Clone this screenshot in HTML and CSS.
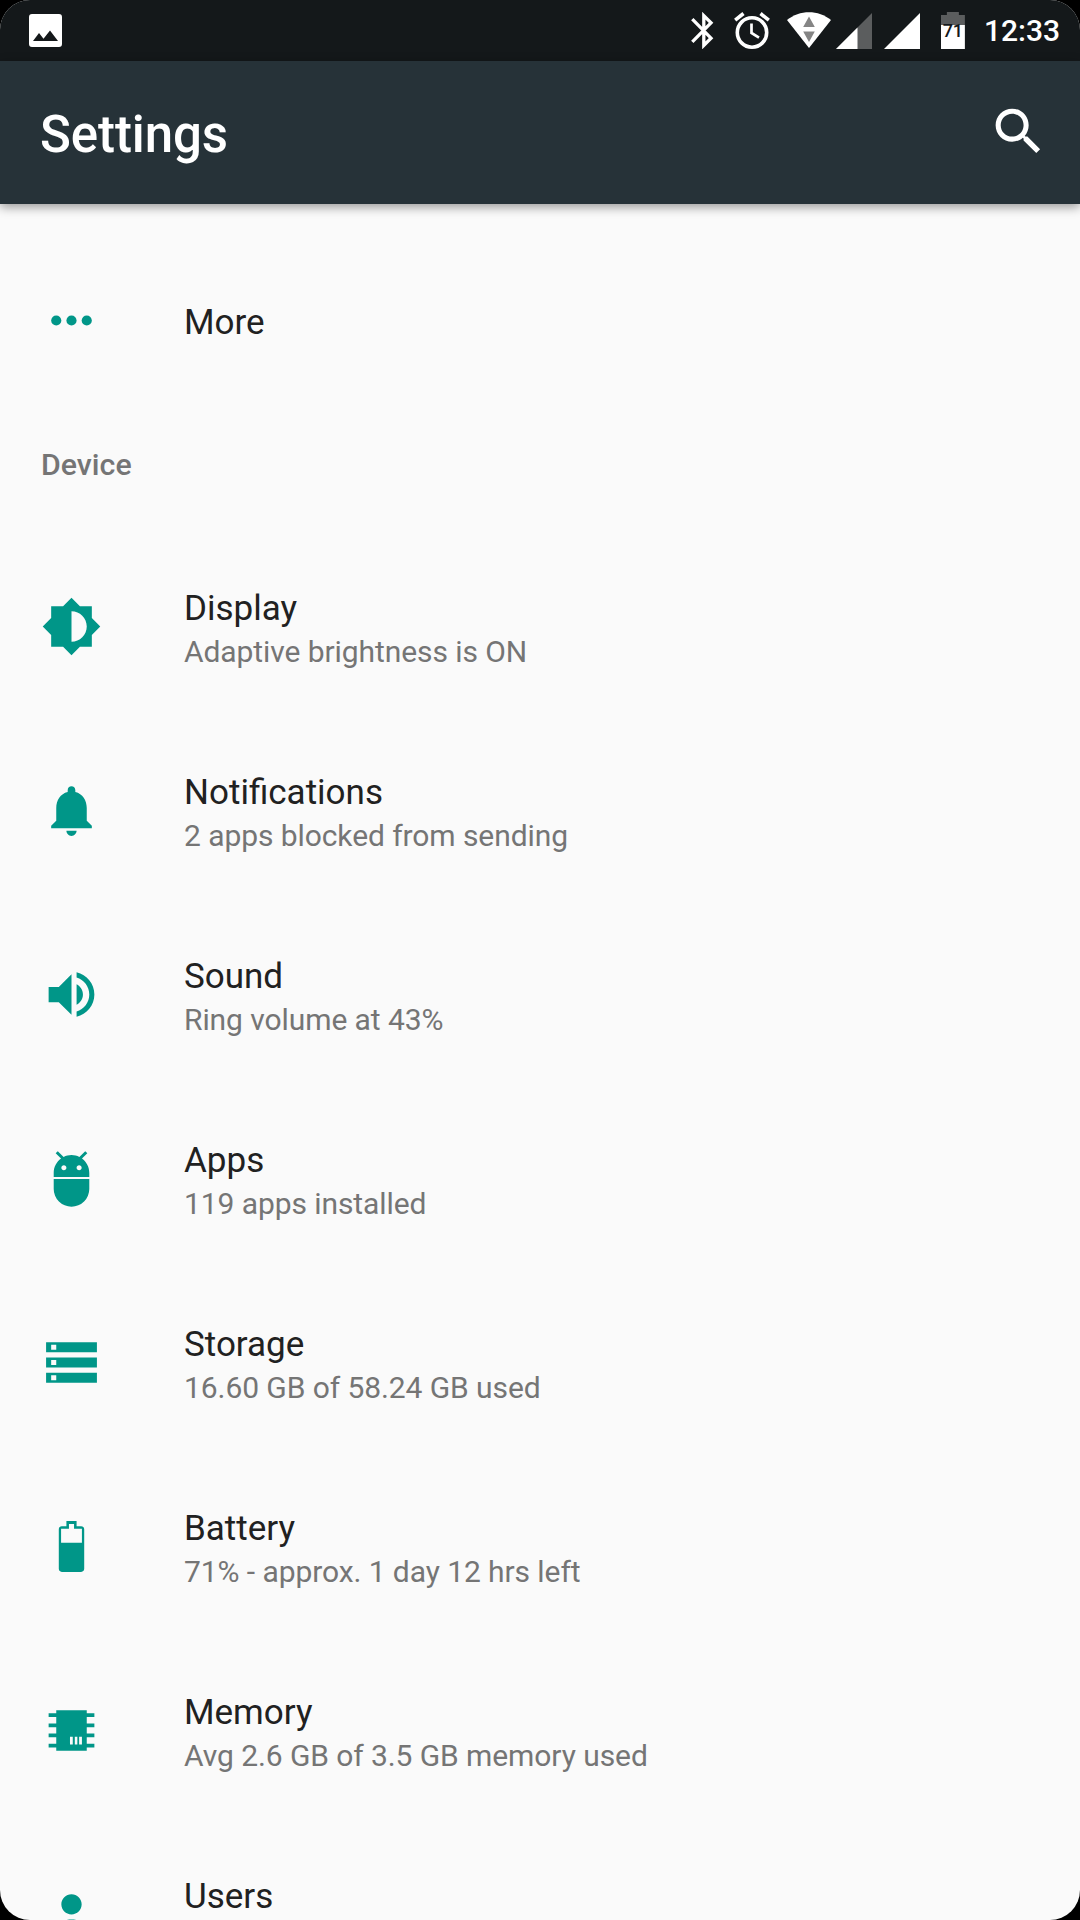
FILE: index.html
```html
<!DOCTYPE html>
<html lang="en">
<head>
  <meta charset="UTF-8" />
  <meta name="viewport" content="width=device-width, initial-scale=1.0" />
  <title>Settings</title>
  <link rel="stylesheet" href="styles.css">
</head>
<body>
  <div class="screen">
    <div class="status-bar">
      <svg class="st-picture" width="33" height="33" viewBox="0 0 33 33"><path fill="#fff" fill-rule="evenodd" d="M3 0h27a3 3 0 0 1 3 3v27a3 3 0 0 1-3 3H3a3 3 0 0 1-3-3V3a3 3 0 0 1 3-3zM4 27h25L21 16.500l-6.500 8.300L10 19z"/></svg>
      <div class="status-icons">
        <!-- bluetooth -->
        <svg class="st-bluetooth" width="23" height="37" viewBox="0 0 23 37"><path fill="none" stroke="#fff" stroke-width="3.300" d="M1.300 7.200L20 26.200l-7.200 7.200V3.700L20 10.800 1.300 29.800"/></svg>
        <!-- alarm -->
        <svg class="st-alarm" width="36" height="37" viewBox="0 0 36 37"><g fill="none" stroke="#fff" stroke-width="3.600"><circle cx="18" cy="20.500" r="14.700"/><path d="M1.200 8.200l8.300-6.700M34.800 8.200l-8.300-6.700"/><path stroke-width="2.700" d="M17.500 11.500V21l7.500 4.700"/></g></svg>
        <!-- wifi -->
        <svg class="st-wifi" width="44" height="36" viewBox="0 0 44 36"><path fill="#fff" d="M0 8C12.500-2.500 31.500-2.500 44 8L22 36z"/><path fill="#858585" d="M22 4.500L27.800 15H16.200zM22 30L27.800 19.500H16.200z"/></svg>
        <!-- mobile signal -->
        <svg class="st-signal" width="36" height="36" viewBox="0 0 36 36"><path fill="#5b5d5e" d="M36 0v36H0z"/><path fill="#fff" d="M21.500 14.500V36H0z"/></svg>
        <svg class="st-signal-full" width="36" height="36" viewBox="0 0 36 36"><path fill="#fff" d="M36 0v36H0z"/></svg>
        <div class="st-battery">71</div>
        <span class="clock">12:33</span>
      </div>
    </div>

    <header class="toolbar">
      <h1>Settings</h1>
      <svg class="icon search" viewBox="0 0 24 24"><path d="M15.500 14h-.79l-.28-.27C15.410 12.590 16 11.110 16 9.500 16 5.910 13.090 3 9.500 3S3 5.910 3 9.500 5.910 16 9.500 16c1.610 0 3.090-.59 4.230-1.570l.27.28v.79l5 4.990L20.490 19l-4.990-5zm-6 0C7.010 14 5 11.990 5 9.500S7.010 5 9.500 5 14 7.010 14 9.500 11.990 14 9.500 14z"/></svg>
    </header>

    <main class="list">
      <div class="item">
        <svg class="icon" viewBox="0 0 24 24"><circle cx="6" cy="12" r="2"/><circle cx="12" cy="12" r="2"/><circle cx="18" cy="12" r="2"/></svg>
        <div class="text"><div class="title">More</div></div>
      </div>

      <h2 class="category">Device</h2>

      <div class="item">
        <svg class="icon" viewBox="0 0 24 24"><path fill-rule="evenodd" d="M20 15.310L23.310 12 20 8.690V4h-4.690L12 .69 8.690 4H4v4.690L.69 12 4 15.310V20h4.690L12 23.310 15.310 20H20v-4.690zM12 18V6c3.310 0 6 2.690 6 6s-2.690 6-6 6z"/></svg>
        <div class="text">
          <div class="title">Display</div>
          <div class="summary">Adaptive brightness is ON</div>
        </div>
      </div>
      <div class="item">
        <svg class="icon" viewBox="0 0 24 24"><path d="M12 22c1.100 0 2-.9 2-2h-4c0 1.100.9 2 2 2zM18 16v-5c0-3.070-1.630-5.640-4.500-6.320V4c0-.83-.67-1.500-1.500-1.500s-1.500.67-1.500 1.500v.68C7.640 5.360 6 7.920 6 11v5l-2 2v1h16v-1l-2-2z"/></svg>
        <div class="text">
          <div class="title">Notifications</div>
          <div class="summary">2 apps blocked from sending</div>
        </div>
      </div>
      <div class="item">
        <svg class="icon" viewBox="0 0 24 24"><path d="M3 9v6h4l5 5V4L7 9H3zM14 7.970v8.050c1.480-.73 2.500-2.250 2.500-4.020s-1.020-3.290-2.500-4.030zM14 3.230v2.060c2.890.86 5 3.540 5 6.710s-2.110 5.850-5 6.710v2.060c4.010-.91 7-4.490 7-8.770s-2.990-7.860-7-8.770z"/></svg>
        <div class="text">
          <div class="title">Sound</div>
          <div class="summary">Ring volume at 43%</div>
        </div>
      </div>
      <div class="item">
        <svg class="icon" viewBox="0 0 24 24"><path fill-rule="evenodd" d="M5 16.100a7 7 0 0 0 14 0V12.200H5zM16.120 4.170l2.100-2.100-.82-.83-2.310 2.310C14.160 3.080 13.120 2.800 12 2.800s-2.160.28-3.090.75L6.600 1.240l-.82.83 2.100 2.100C6.140 5.440 5 7.480 5 9.800v1.600h14V9.800c0-2.320-1.140-4.360-2.880-5.630zM9 8.800c-.55 0-1-.45-1-1s.45-1 1-1 1 .45 1 1-.45 1-1 1zm6 0c-.55 0-1-.45-1-1s.45-1 1-1 1 .45 1 1-.45 1-1 1z"/></svg>
        <div class="text">
          <div class="title">Apps</div>
          <div class="summary">119 apps installed</div>
        </div>
      </div>
      <div class="item">
        <svg class="icon" viewBox="0 0 24 24"><path fill-rule="evenodd" d="M2 20h20v-4H2v4zm2-3h2v2H4v-2zM2 4v4h20V4H2zm4 3H4V5h2v2zm-4 7h20v-4H2v4zm2-3h2v2H4v-2z"/></svg>
        <div class="text">
          <div class="title">Storage</div>
          <div class="summary">16.60 GB of 58.24 GB used</div>
        </div>
      </div>
      <div class="item">
        <svg class="icon" viewBox="0 0 24 24"><path fill-rule="evenodd" d="M14 4V2h-4v2H8.200C7.500 4 7 4.500 7 5.200v15.600c0 .7.500 1.200 1.200 1.200h7.600c.7 0 1.200-.5 1.200-1.200V5.200c0-.7-.5-1.200-1.200-1.200H14zM11 3.100h2V5h3.100v5.500H7.900V5H11z"/></svg>
        <div class="text">
          <div class="title">Battery</div>
          <div class="summary">71% - approx. 1 day 12 hrs left</div>
        </div>
      </div>
      <div class="item">
        <svg class="icon" viewBox="0 0 24 24"><path fill-rule="evenodd" d="M6 4h12v1.200h3v1.500h-3v2.500h3v1.500h-3v2.500h3v1.500h-3v2.500h3v1.500h-3V20H6v-1.300H3v-1.500h3v-2.500H3v-1.500h3v-2.500H3V9.200h3V6.700H3V5.200h3zM11.400 14.500v3h1.100v-3zm1.900 0v3h1v-3zm1.700 0v3h1.100v-3z"/></svg>
        <div class="text">
          <div class="title">Memory</div>
          <div class="summary">Avg 2.6 GB of 3.5 GB memory used</div>
        </div>
      </div>
      <div class="item">
        <svg class="icon" viewBox="0 0 24 24"><path d="M12 12c2.210 0 4-1.790 4-4s-1.790-4-4-4-4 1.790-4 4 1.790 4 4 4zm0 2c-2.670 0-8 1.340-8 4v2h16v-2c0-2.660-5.330-4-8-4z"/></svg>
        <div class="text">
          <div class="title">Users</div>
          <div class="summary">&nbsp;</div>
        </div>
      </div>
    </main>
  </div>
</body>
</html>
```
FILE: styles.css
```css
* {
  box-sizing: border-box;
}
body {
  margin: 0;
  background: #000;
  font-family: Roboto, sans-serif;
  overflow: hidden;
}
.screen {
  width: 1080px;
  height: 1920px;
  background: #fafafa;
  border-radius: 30px;
  overflow: hidden;
}
svg {
  display: block;
  flex: none;
}

/* status bar */
.status-bar {
  height: 61px;
  padding: 0 20px 0 29px;
  background: #14181a;
  display: flex;
  justify-content: space-between;
}
.st-picture {
  margin-top: 14px;
}
.status-icons {
  display: flex;
  align-items: flex-start;
  padding-top: 12px;
}
.st-alarm {
  margin-left: 20px;
}
.st-wifi {
  margin-left: 17px;
}
.st-signal {
  margin: 1px 0 0 5px;
}
.st-signal-full {
  margin: 1px 0 0 12px;
}
.st-battery {
  width: 24px;
  height: 37px;
  margin-left: 21px;
  background: linear-gradient(#5b5d5e 13px, #fff 13px);
  clip-path: polygon(0 3px, 6px 3px, 6px 0, 18px 0, 18px 3px, 24px 3px, 24px 37px, 0 37px);
  color: #14181a;
  font-size: 18px;
  font-weight: 500;
  line-height: 38px;
  text-align: center;
}
.clock {
  margin-left: 19px;
  color: #fff;
  font-size: 30px;
  font-weight: 500;
  line-height: 38px;
}

/* app bar */
.toolbar {
  position: relative;
  height: 143px;
  padding: 0 31px 0 40px;
  background: #263238;
  box-shadow: 0 3px 10px rgba(0, 0, 0, 0.400);
  display: flex;
  align-items: center;
  justify-content: space-between;
}
.toolbar h1 {
  margin: 3px 0 0;
  color: #fff;
  font-size: 51px;
  font-weight: 500;
  letter-spacing: -0.100px;
}
.icon {
  width: 61px;
  height: 61px;
  fill: #009688;
}
.search {
  margin-bottom: 2px;
  fill: #fff;
}

/* settings list */
.list {
  padding-top: 24px;
}
.item {
  height: 184px;
  padding-left: 41px;
  display: flex;
  align-items: center;
}
.text {
  margin-left: 82px;
  padding-top: 5px;
}
.title {
  color: #212121;
  font-size: 35px;
  line-height: 46px;
}
.summary {
  margin-top: -1px;
  color: #757575;
  font-size: 30px;
  line-height: 41px;
  letter-spacing: -0.080px;
}
.category {
  height: 122px;
  margin: 0;
  padding-left: 41px;
  color: #757575;
  font-size: 30.300px;
  font-weight: 500;
  line-height: 105px;
}
```
